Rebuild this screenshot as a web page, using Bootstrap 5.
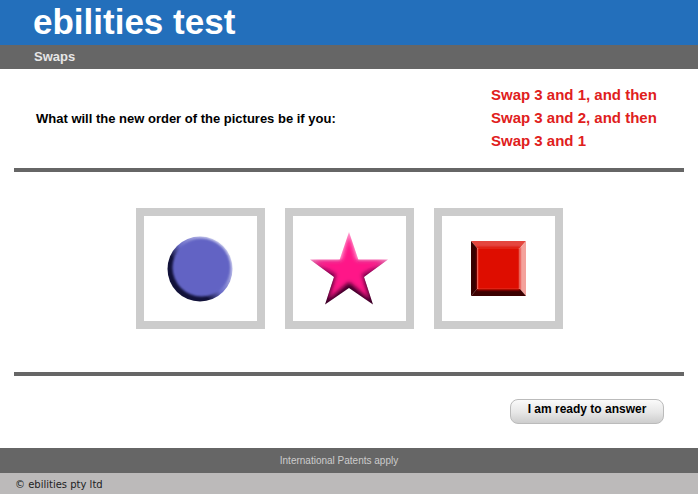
<!DOCTYPE html>
<html lang="en">
<head>
    <meta charset="UTF-8">
    <meta name="viewport" content="width=device-width, initial-scale=1.0">
    <title>ebilities test</title>
    <link href="https://cdn.jsdelivr.net/npm/bootstrap@5.3.0/dist/css/bootstrap.min.css" rel="stylesheet">
    <style>
        body {
            background-color: #fff;
            font-family: "Liberation Sans", Arial, sans-serif;
            color: #000;
            overflow: hidden;
        }
        .test-header {
            background-color: #236fbb;
            height: 45px;
            padding-left: 33px;
        }
        .test-header h1 {
            color: #fff;
            font-size: 35px;
            font-weight: 700;
            line-height: 43px;
            margin: 0;
        }
        .test-subhead {
            background-color: #666;
            color: #e6e6e6;
            height: 24px;
            line-height: 23px;
            padding-left: 34px;
            font-size: 13px;
            font-weight: 700;
        }
        .question-area {
            height: 99px;
            padding-left: 36px;
        }
        .question-text {
            width: 455px;
            font-size: 13px;
            font-weight: 700;
        }
        .swap-list {
            margin-top: -2px;
        }
        .swap-line {
            color: #e0201c;
            font-size: 15px;
            font-weight: 700;
            line-height: 23px;
        }
        .test-rule {
            background-color: #666;
            border: 0;
            height: 4px;
            margin: 0 14px;
            opacity: 1;
        }
        .picture-area {
            height: 200px;
            gap: 20px;
            padding-top: 36px;
        }
        .picture-box {
            width: 129px;
            height: 121px;
            border: 8px solid #ccc;
        }
        .answer-area {
            height: 72px;
            padding: 23px 34px 0 0;
        }
        .answer-btn {
            width: 154px;
            height: 25px;
            padding: 0 0 5px;
            font-size: 12px;
            font-weight: 700;
            line-height: 16px;
            color: #000;
            border: 1px solid #bbb;
            border-radius: 8px;
            background: linear-gradient(#fafafa, #e6e6e6 55%, #cdcdcd);
        }
        .patents-bar {
            background-color: #666;
            color: #ccc;
            height: 25px;
            line-height: 26px;
            padding-right: 20px;
            font-size: 10px;
        }
        .copy-bar {
            background-color: #bcbaba;
            color: #222;
            height: 21px;
            line-height: 24px;
            padding-left: 15px;
            font-family: "DejaVu Sans", Verdana, sans-serif;
            font-size: 10px;
        }
    </style>
</head>
<body>

<!-- Header -->
<header class="test-header">
    <h1>ebilities test</h1>
</header>
<div class="test-subhead">Swaps</div>

<!-- Question -->
<div class="question-area d-flex align-items-center">
    <div class="question-text">What will the new order of the pictures be if you:</div>
    <div class="swap-list">
        <div class="swap-line">Swap 3 and 1, and then</div>
        <div class="swap-line">Swap 3 and 2, and then</div>
        <div class="swap-line">Swap 3 and 1</div>
    </div>
</div>
<hr class="test-rule">

<!-- Pictures -->
<div class="picture-area d-flex justify-content-center align-items-start">
    <div class="picture-box d-flex justify-content-center align-items-center">
        <svg width="66" height="66" viewBox="0 0 66 66">
            <defs>
                <linearGradient id="discEdge" x1="0.1" y1="0.85" x2="0.9" y2="0.15">
                    <stop offset="0.3" stop-color="#12123a"/>
                    <stop offset="0.5" stop-color="#6a6cc8"/>
                    <stop offset="0.9" stop-color="#c8c9ec"/>
                </linearGradient>
                <filter id="discBlur"><feGaussianBlur stdDeviation="1"/></filter>
            </defs>
            <circle cx="33" cy="33" r="32.5" fill="url(#discEdge)"/>
            <circle cx="34.5" cy="31.5" r="29" fill="#6264c4" filter="url(#discBlur)"/>
        </svg>
    </div>
    <div class="picture-box d-flex justify-content-center align-items-center">
        <svg width="78" height="73" viewBox="0 0 78 73">
            <defs>
                <linearGradient id="starEdge" x1="0.5" y1="0" x2="0.5" y2="1">
                    <stop offset="0.36" stop-color="#ffa8d4"/>
                    <stop offset="0.5" stop-color="#a00860"/>
                    <stop offset="0.72" stop-color="#3c0028"/>
                </linearGradient>
                <filter id="starBlur"><feGaussianBlur stdDeviation="2.2"/></filter>
                <clipPath id="starClip">
                    <polygon points="39,0 48.3,27.5 78,27.5 54,45 63,72.5 39,56 15,72.5 24,45 0,27.5 29.7,27.5"/>
                </clipPath>
            </defs>
            <g clip-path="url(#starClip)">
                <rect width="78" height="73" fill="url(#starEdge)"/>
                <polygon points="39,2 47,29 76,29 52,42 60,68 39,50 18,68 26,42 2,29 31,29" fill="#ff1488" filter="url(#starBlur)"/>
            </g>
        </svg>
    </div>
    <div class="picture-box d-flex justify-content-center align-items-center">
        <svg width="55" height="55" viewBox="0 0 55 55">
            <defs>
                <filter id="tileBlur"><feGaussianBlur stdDeviation="1.1"/></filter>
                <clipPath id="tileClip"><rect width="55" height="55"/></clipPath>
            </defs>
            <g clip-path="url(#tileClip)">
                <polygon points="0,0 55,0 49,7 6,7" fill="#e4463e"/>
                <polygon points="55,0 55,55 49,48 49,7" fill="#f4a29c"/>
                <polygon points="0,55 55,55 49,48 6,48" fill="#3c0000"/>
                <polygon points="0,0 0,55 6,48 6,7" fill="#360000"/>
                <rect x="6" y="6" width="43" height="43" fill="#de0c00" filter="url(#tileBlur)"/>
            </g>
        </svg>
    </div>
</div>
<hr class="test-rule">

<!-- Answer button -->
<div class="answer-area d-flex justify-content-end align-items-start">
    <button type="button" class="btn answer-btn">I am ready to answer</button>
</div>

<!-- Footer -->
<div class="patents-bar text-center">International Patents apply</div>
<div class="copy-bar">&copy; ebilities pty ltd</div>

<script src="https://cdn.jsdelivr.net/npm/bootstrap@5.3.0/dist/js/bootstrap.bundle.min.js"></script>
</body>
</html>
